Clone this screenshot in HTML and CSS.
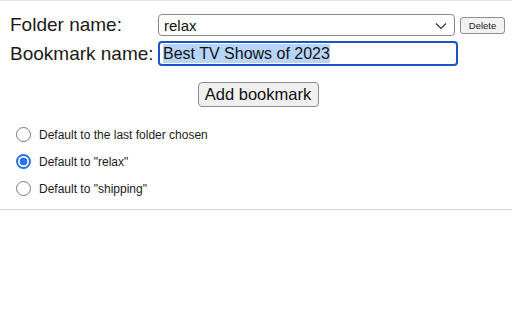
FILE: index.html
```html
<!DOCTYPE html>
<html>
<head>
<meta charset="utf-8">
<link rel="stylesheet" href="styles.css">
</head>
<body>
<div class="popup">
  <div class="row row-folder">
    <label class="lbl">Folder name:</label>
    <div class="select-wrap">
      <select class="select"><option>relax</option><option>shipping</option></select>
      <svg class="chev" width="12" height="8" viewBox="0 0 12 8"><path d="M1 1.5 L6 6.5 L11 1.5" fill="none" stroke="#333" stroke-width="1.2"/></svg>
    </div>
    <button class="btn-del">Delete</button>
  </div>
  <div class="row row-name">
    <label class="lbl">Bookmark name:</label>
    <div class="field"><span class="sel">Best TV Shows of 2023</span></div>
  </div>
  <div class="row-add">
    <button class="btn-add">Add bookmark</button>
  </div>
  <div class="radios">
    <label class="radio"><span class="dot"></span>Default to the last folder chosen</label>
    <label class="radio"><span class="dot on"></span>Default to "relax"</label>
    <label class="radio"><span class="dot"></span>Default to "shipping"</label>
  </div>
</div>
</body>
</html>
```
FILE: styles.css
```css
html, body {
  margin: 0;
  padding: 0;
  background: #fff;
}
body {
  font-family: "Liberation Sans", Arial, sans-serif;
  color: #1a1a1a;
}
.popup {
  border-top: 1px solid #e6e6e6;
  border-bottom: 1px solid #d4d4d4;
  height: 210px;
  box-sizing: border-box;
  box-shadow: 0 1px 3px rgba(0,0,0,0.28);
  padding: 13px 0 0 10px;
}
.row {
  display: flex;
  align-items: center;
}
.lbl {
  width: 148px;
  font-size: 19px;
  white-space: nowrap;
}
.select-wrap {
  position: relative;
  width: 297px;
  height: 22px;
}
.select {
  appearance: none;
  -webkit-appearance: none;
  width: 100%;
  height: 100%;
  border: 1px solid #8a8a8a;
  border-radius: 4px;
  background: #fff;
  font-family: "Liberation Sans", Arial, sans-serif;
  font-size: 15px;
  color: #111;
  padding: 0 0 0 5px;
  margin: 0;
}
.chev {
  position: absolute;
  right: 8px;
  top: 8px;
}
.btn-del {
  margin-left: 5px;
  height: 17px;
  width: 45px;
  padding: 0;
  font-family: "Liberation Sans", Arial, sans-serif;
  font-size: 9.5px;
  color: #222;
  background: #f2f2f2;
  border: 1px solid #8e8e8e;
  border-radius: 3px;
}
.row-name {
  margin-top: 5px;
}
.field {
  width: 293px;
  height: 21px;
  border: 2px solid #1b54c8;
  border-radius: 4px;
  display: flex;
  align-items: center;
  padding-left: 3px;
  font-size: 16px;
  color: #111;
}
.sel {
  background: #b7d4fb;
  line-height: 19px;
}
.row-add {
  display: flex;
  justify-content: center;
  margin-top: 16px;
  padding-right: 6px;
}
.btn-add {
  height: 25px;
  width: 121px;
  padding: 0;
  font-family: "Liberation Sans", Arial, sans-serif;
  font-size: 16.5px;
  color: #111;
  background: #f0f0f0;
  border: 1px solid #8e8e8e;
  border-radius: 4px;
}
.radios {
  display: flex;
  flex-direction: column;
  gap: 12px;
  margin-top: 20px;
  padding-left: 6px;
}
.radio {
  display: flex;
  align-items: center;
  font-size: 12px;
  color: #1a1a1a;
  height: 15px;
}
.dot {
  width: 13px;
  height: 13px;
  border: 1px solid #7a7a7a;
  border-radius: 50%;
  margin-right: 8px;
  box-sizing: content-box;
  background: #fff;
  flex: none;
}
.dot.on {
  width: 11px;
  height: 11px;
  border: 2px solid #2a72ee;
  background: radial-gradient(circle, #2a72ee 0 3.6px, #fff 4.2px);
}
```
